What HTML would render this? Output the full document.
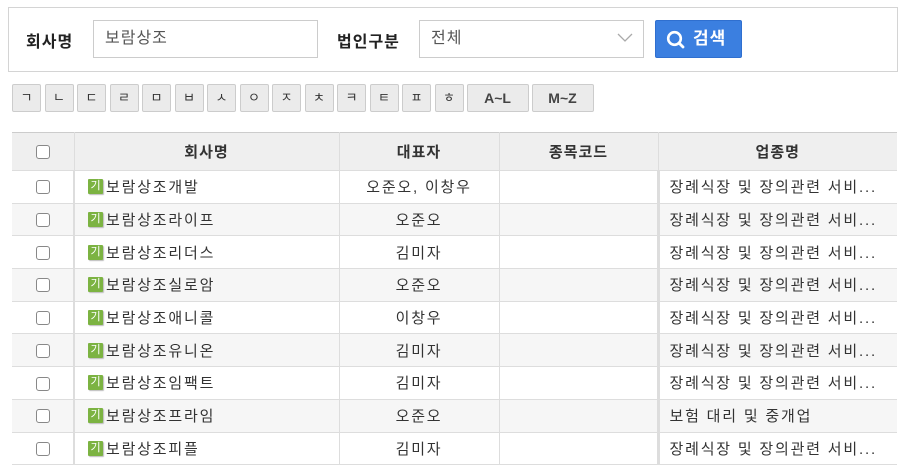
<!DOCTYPE html>
<html><head><meta charset="utf-8"><style>
*{box-sizing:border-box;margin:0;padding:0}
body{width:906px;height:476px;background:#fff;font-family:"Liberation Sans","Noto Sans CJK KR",sans-serif;color:#333;position:relative;overflow:hidden;font-size:15px}
.abs{position:absolute}
.box{left:8px;top:7px;width:890px;height:65px;border:1px solid #d4d4d4}
.lbl{font-size:16px;font-weight:bold;color:#222;letter-spacing:1px}
.inp{border:1px solid #ccc;height:38px;top:20px;padding-left:11px;line-height:36px;font-size:16px;color:#555;letter-spacing:1px}
.btn{left:655px;top:20px;width:87px;height:38px;background:#3b7fe0;border:1px solid #2f6fcf;border-radius:2px;color:#fff;font-weight:bold;font-size:17px;line-height:36px}
.keys{left:12px;top:84px;display:flex}
.k{width:29px;height:28px;margin-right:3.5px;background:#ebebeb;border:1px solid #ccc;border-radius:2px;font-size:13px;text-align:center;line-height:26px;color:#333}
.k.w{width:62px;margin-right:3px;font-size:14px;font-weight:bold;color:#444}
table{position:absolute;left:12px;top:132px;width:885px;border-collapse:collapse;table-layout:fixed}
td,th{border-bottom:1px solid #ddd;border-right:1px solid #ddd;height:32.7px;font-size:15px;font-weight:normal;white-space:nowrap;overflow:hidden;letter-spacing:1.8px}
th{height:38px;background:#efefef;color:#333;font-weight:bold;border-top:1px solid #ccc;letter-spacing:1px}
td:first-child{border-right:2px solid #ddd}
td:nth-child(4){border-right:3px solid #ddd}
th:last-child,td:last-child{border-right:none}
tr.g td{background:#f6f6f6}
.cb{display:inline-block;width:14px;height:14px;border:1px solid #888;border-radius:3px;background:#fff;vertical-align:middle}
.c{text-align:center}
.ic{display:inline-block;width:15px;height:15px;background:#7cb342;color:#fff;font-size:11px;line-height:15px;text-align:center;border-radius:1px;vertical-align:middle;margin:0 3px 0 13px;box-shadow:1px 1px 1px #bbb;letter-spacing:0}
.nm{vertical-align:middle;color:#333}
.ind{padding-left:10px}
</style></head><body>
<div class="abs box"></div>
<div class="abs lbl" style="left:26px;top:28px">회사명</div>
<div class="abs inp" style="left:93px;width:225px">보람상조</div>
<div class="abs lbl" style="left:337px;top:28px">법인구분</div>
<div class="abs inp" style="left:419px;width:225px">전체
<svg class="abs" style="left:197px;top:12px" width="16" height="10" viewBox="0 0 16 10"><path d="M1 1 L8 8 L15 1" fill="none" stroke="#aaa" stroke-width="1.3"/></svg></div>
<div class="abs btn"><svg class="abs" style="left:10px;top:9px" width="19" height="19" viewBox="0 0 19 19"><circle cx="8.5" cy="8.5" r="6.3" fill="none" stroke="#fff" stroke-width="2.6"/><path d="M13 13 L17 17" stroke="#fff" stroke-width="2.8" stroke-linecap="round"/></svg><span style="position:absolute;left:37px;letter-spacing:1px">검색</span></div>
<div class="abs keys">
<div class="k">ㄱ</div><div class="k">ㄴ</div><div class="k">ㄷ</div><div class="k">ㄹ</div><div class="k">ㅁ</div><div class="k">ㅂ</div><div class="k">ㅅ</div><div class="k">ㅇ</div><div class="k">ㅈ</div><div class="k">ㅊ</div><div class="k">ㅋ</div><div class="k">ㅌ</div><div class="k">ㅍ</div><div class="k" style="margin-right:3px">ㅎ</div><div class="k w">A~L</div><div class="k w">M~Z</div>
</div>
<table>
<colgroup><col style="width:62px"><col style="width:265px"><col style="width:160px"><col style="width:159px"><col></colgroup>
<tr><th><span class="cb"></span></th><th>회사명</th><th>대표자</th><th>종목코드</th><th>업종명</th></tr>
<tr><td class="c"><span class="cb"></span></td><td><span class="ic">기</span><span class="nm">보람상조개발</span></td><td class="c">오준오, 이창우</td><td></td><td class="ind">장례식장 및 장의관련 서비...</td></tr>
<tr class="g"><td class="c"><span class="cb"></span></td><td><span class="ic">기</span><span class="nm">보람상조라이프</span></td><td class="c">오준오</td><td></td><td class="ind">장례식장 및 장의관련 서비...</td></tr>
<tr><td class="c"><span class="cb"></span></td><td><span class="ic">기</span><span class="nm">보람상조리더스</span></td><td class="c">김미자</td><td></td><td class="ind">장례식장 및 장의관련 서비...</td></tr>
<tr class="g"><td class="c"><span class="cb"></span></td><td><span class="ic">기</span><span class="nm">보람상조실로암</span></td><td class="c">오준오</td><td></td><td class="ind">장례식장 및 장의관련 서비...</td></tr>
<tr><td class="c"><span class="cb"></span></td><td><span class="ic">기</span><span class="nm">보람상조애니콜</span></td><td class="c">이창우</td><td></td><td class="ind">장례식장 및 장의관련 서비...</td></tr>
<tr class="g"><td class="c"><span class="cb"></span></td><td><span class="ic">기</span><span class="nm">보람상조유니온</span></td><td class="c">김미자</td><td></td><td class="ind">장례식장 및 장의관련 서비...</td></tr>
<tr><td class="c"><span class="cb"></span></td><td><span class="ic">기</span><span class="nm">보람상조임팩트</span></td><td class="c">김미자</td><td></td><td class="ind">장례식장 및 장의관련 서비...</td></tr>
<tr class="g"><td class="c"><span class="cb"></span></td><td><span class="ic">기</span><span class="nm">보람상조프라임</span></td><td class="c">오준오</td><td></td><td class="ind">보험 대리 및 중개업</td></tr>
<tr><td class="c"><span class="cb"></span></td><td><span class="ic">기</span><span class="nm">보람상조피플</span></td><td class="c">김미자</td><td></td><td class="ind">장례식장 및 장의관련 서비...</td></tr>
</table>
</body></html>
